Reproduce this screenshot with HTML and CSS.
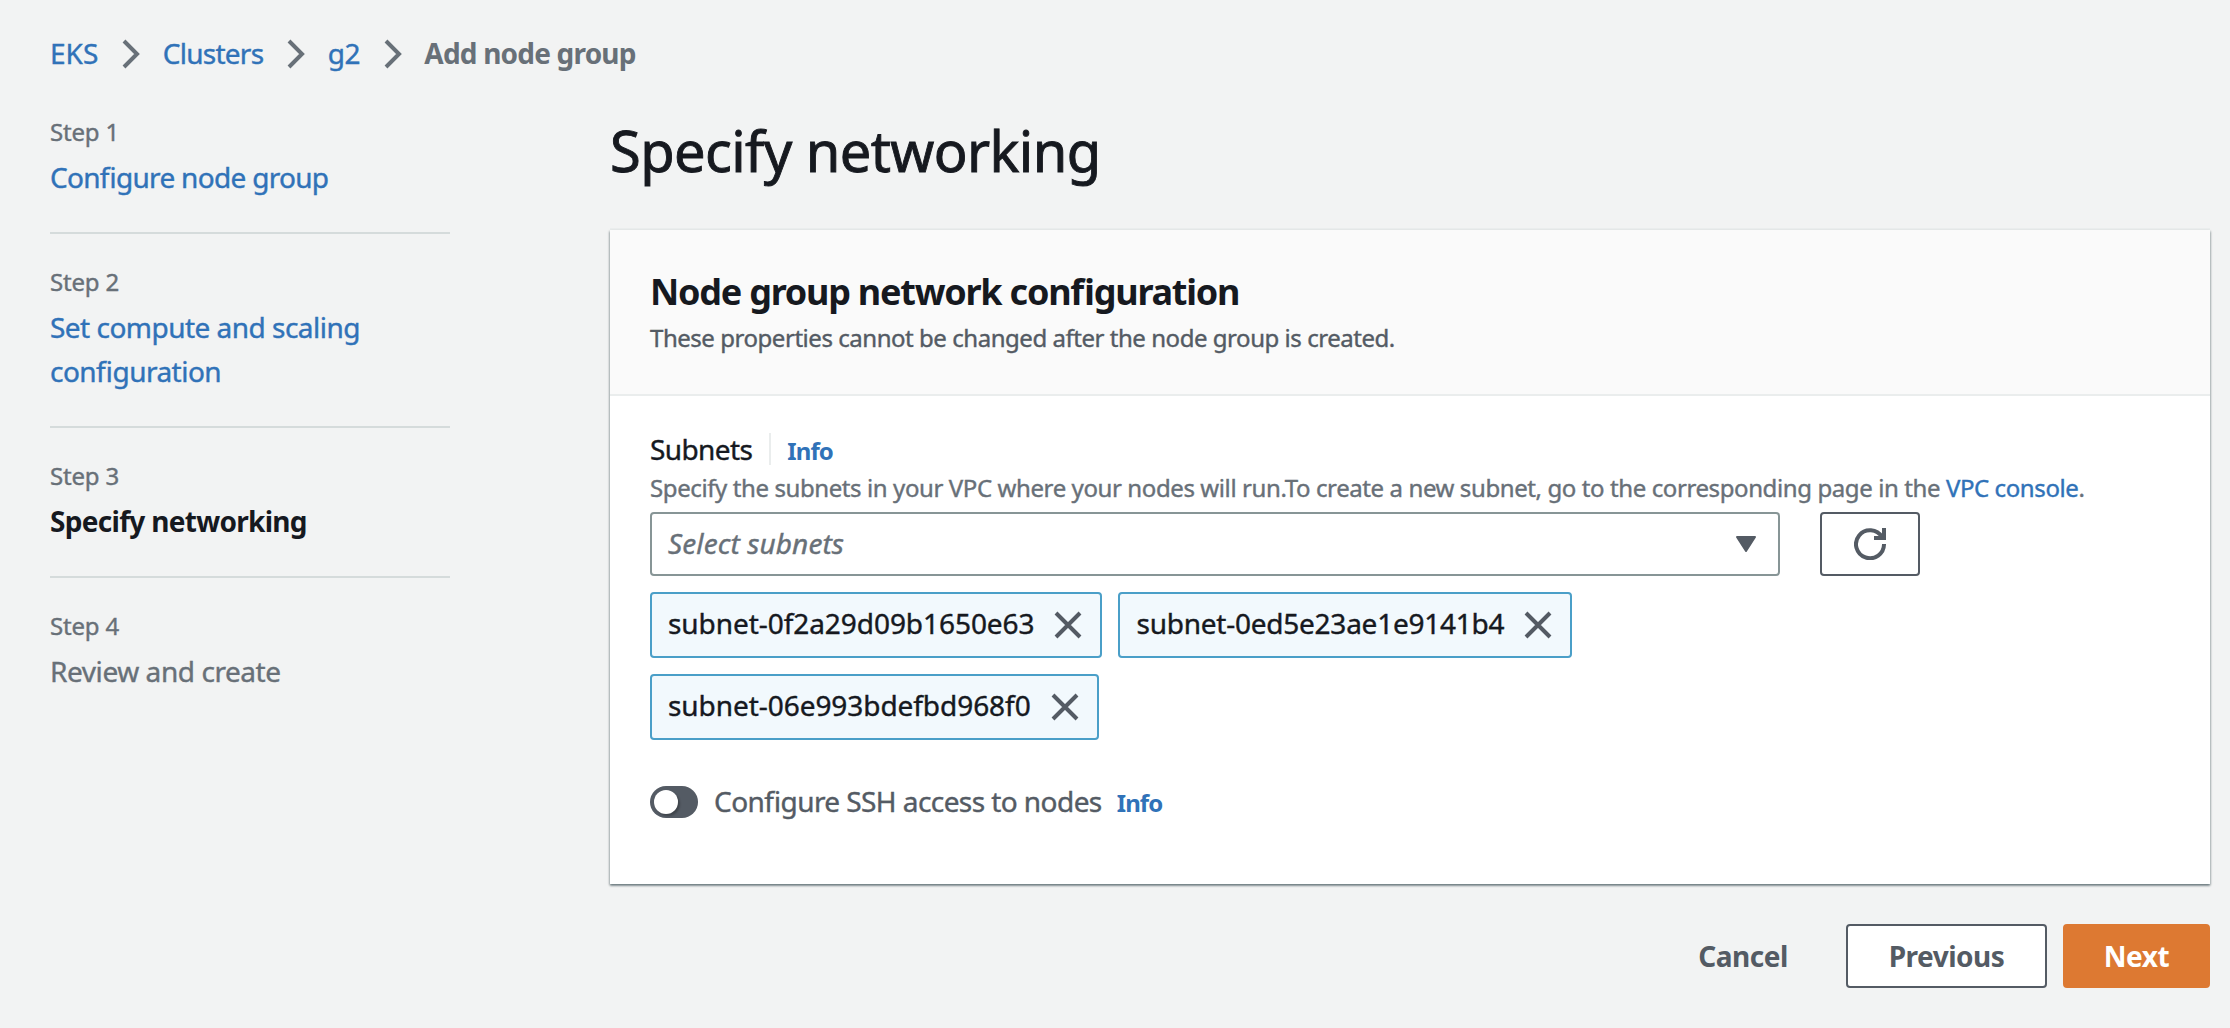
FILE: index.html
```html
<!DOCTYPE html>
<html lang="en">
<head>
<meta charset="utf-8">
<title>Add node group</title>
<link rel="stylesheet" href="styles.css">
</head>
<body>
<nav class="breadcrumb">
  <a class="link crumb-eks">EKS</a>
  <svg class="chevron" width="18" height="30" viewBox="0 0 18 30"><path d="M2 2l13 13L2 28"/></svg>
  <a class="link crumb-clusters">Clusters</a>
  <svg class="chevron" width="18" height="30" viewBox="0 0 18 30"><path d="M2 2l13 13L2 28"/></svg>
  <a class="link">g2</a>
  <svg class="chevron" width="18" height="30" viewBox="0 0 18 30"><path d="M2 2l13 13L2 28"/></svg>
  <span class="current">Add node group</span>
</nav>
<div class="layout">
  <aside class="steps">
    <div class="step"><div class="step-label">Step 1</div><a class="step-name link">Configure node group</a></div>
    <div class="step"><div class="step-label">Step 2</div><a class="step-name link wide">Set compute and scaling configuration</a></div>
    <div class="step"><div class="step-label">Step 3</div><div class="step-name active">Specify networking</div></div>
    <div class="step"><div class="step-label">Step 4</div><div class="step-name upcoming">Review and create</div></div>
  </aside>
  <main class="main">
    <h1 class="title">Specify networking</h1>
    <section class="card">
      <header class="card-header">
        <h2 class="card-title">Node group network configuration</h2>
        <p class="card-text">These properties cannot be changed after the node group is created.</p>
      </header>
      <div class="card-body">
        <div class="label-row"><span class="label">Subnets</span><span class="divider"></span><a class="info">Info</a></div>
        <p class="hint">Specify the subnets in your VPC where your nodes will run.To create a new subnet, go to the corresponding page in the <a class="link">VPC console</a>.</p>
        <div class="select-row">
          <div class="select"><span class="placeholder">Select subnets</span>
            <svg width="22" height="18" viewBox="0 0 22 18"><path d="M2 2h18l-9 14z" fill="#545b64" stroke="#545b64" stroke-width="2" stroke-linejoin="round"/></svg>
          </div>
          <button class="refresh" aria-label="Refresh">
            <svg width="32" height="32" viewBox="0 0 32 32"><path d="M30 16A14 14 0 1 1 28 9"/><path d="M30 0v10H20"/></svg>
          </button>
        </div>
        <div class="tokens">
          <div class="token"><span>subnet-0f2a29d09b1650e63</span><svg width="28" height="28" viewBox="0 0 28 28"><path d="M2 2l24 24M26 2L2 26"/></svg></div>
          <div class="token tight"><span>subnet-0ed5e23ae1e9141b4</span><svg width="28" height="28" viewBox="0 0 28 28"><path d="M2 2l24 24M26 2L2 26"/></svg></div>
          <div class="token"><span>subnet-06e993bdefbd968f0</span><svg width="28" height="28" viewBox="0 0 28 28"><path d="M2 2l24 24M26 2L2 26"/></svg></div>
        </div>
        <div class="toggle-row">
          <span class="toggle"><span class="knob"></span></span>
          <span class="toggle-label">Configure SSH access to nodes</span>
          <a class="info">Info</a>
        </div>
      </div>
    </section>
    <footer class="actions">
      <button class="btn cancel">Cancel</button>
      <button class="btn previous">Previous</button>
      <button class="btn next">Next</button>
    </footer>
  </main>
</div>
</body>
</html>
```
FILE: styles.css
```css
* { box-sizing: border-box; }
body {
  margin: 0;
  height: 1028px;
  overflow: hidden;
  background: #f2f3f3;
  color: #16191f;
  font: 28px/44px "Noto Sans", "Open Sans", sans-serif;
  letter-spacing: -0.6px;
  font-feature-settings: "liga" 1;
  -webkit-text-stroke-width: 0.4px;
}
h1, h2, p { margin: 0; }
h2, .current, .active, .info, .btn { -webkit-text-stroke-width: 0; }
svg { display: block; flex: none; }
path { stroke-linecap: butt; }
.link { color: #3072b8; }

.breadcrumb {
  display: flex;
  align-items: center;
  padding: 31px 0 0 50px;
  height: 75px;
}
.crumb-eks { letter-spacing: 0; }
.crumb-clusters { letter-spacing: -0.75px; }
.chevron { margin: 1px 22.5px 0 24px; }
.chevron path { fill: none; stroke: #687078; stroke-width: 4; }
.current { color: #687078; font-weight: 700; letter-spacing: -0.8px; }

.layout { display: flex; gap: 160px; padding: 41px 20px 0 50px; }
.steps { width: 400px; flex: none; }
.step { padding-bottom: 33px; border-bottom: 2px solid #d5dbdb; margin-bottom: 32px; color: #687078; }
.step:last-child { border: 0; margin: 0; }
.step-label { font-size: 24px; line-height: 32px; margin-bottom: 7px; letter-spacing: -0.2px; }
.step-name { display: block; letter-spacing: -0.7px; }
.step-name.wide { letter-spacing: -0.52px; }
.step-name.upcoming { letter-spacing: -0.43px; }
.step-name.active { color: #16191f; font-weight: 700; }

.main { flex: 1; }
.title { font-size: 56px; font-weight: 400; line-height: 68px; letter-spacing: -0.6px; margin-bottom: 46px; -webkit-text-stroke-width: 0.9px; }
.card {
  height: 654px;
  background: #fff;
  box-shadow: 0 2px 2px 0 rgba(0, 28, 36, .35), 1px 1px 2px 0 rgba(0, 28, 36, .2), -1px 1px 2px 0 rgba(0, 28, 36, .2), 0 -2px 0 0 #eaeded;
}
.card-header { height: 166px; padding: 40px 40px 0; background: #fafafa; border-bottom: 2px solid #eaeded; }
.card-title { font-size: 36px; line-height: 44px; letter-spacing: -1.24px; margin-bottom: 6px; }
.card-text { font-size: 24px; line-height: 36px; letter-spacing: -0.46px; color: #545b64; }
.card-body { padding: 31px 40px 0; }
.label-row { display: flex; align-items: baseline; height: 44px; }
.divider { align-self: flex-start; width: 2px; height: 32px; margin: 6px 16px 0 17px; background: #eaeded; }
.info { color: #3072b8; font-size: 24px; font-weight: 700; letter-spacing: -0.9px; }
.hint { font-size: 24px; line-height: 32px; letter-spacing: -0.4px; color: #687078; margin: 1px 0 8px; white-space: nowrap; }
.select-row { display: flex; gap: 40px; }
.select {
  display: flex;
  align-items: center;
  justify-content: space-between;
  width: 1130px;
  height: 64px;
  padding: 0 21px 0 16px;
  border: 2px solid #879596;
  border-radius: 4px;
}
.placeholder { font-style: italic; color: #687078; letter-spacing: 0.1px; padding-bottom: 2px; }
.refresh {
  display: flex;
  align-items: center;
  justify-content: center;
  width: 100px;
  height: 64px;
  padding: 0;
  background: #fff;
  border: 2px solid #545b64;
  border-radius: 4px;
}
.refresh path { fill: none; stroke: #545b64; stroke-width: 4; }
.tokens { display: flex; flex-wrap: wrap; gap: 16px; width: 1130px; margin-top: 16px; }
.token {
  display: flex;
  align-items: center;
  gap: 20px;
  height: 66px;
  padding: 0 18px 0 16px;
  background: #f2f9fd;
  border: 2px solid #4a9fc8;
  border-radius: 4px;
  letter-spacing: -0.06px;
}
.token.tight { letter-spacing: -0.24px; }
.token span { padding-bottom: 4px; }
.token svg { margin-bottom: 1px; }
.token path { stroke: #545b64; stroke-width: 4; }
.toggle-row { display: flex; align-items: baseline; height: 44px; margin-top: 39px; }
.toggle { align-self: center; width: 48px; height: 32px; padding: 4px; border-radius: 16px; background: #545b64; margin: 2px 16px 0 0; }
.knob { display: block; width: 24px; height: 24px; border-radius: 12px; background: #fff; box-shadow: 2px 2px 2px rgba(0, 0, 0, .25); }
.toggle-label { color: #545b64; letter-spacing: -0.57px; margin-right: 15px; }

.actions { display: flex; justify-content: flex-end; margin-top: 40px; }
.btn {
  height: 64px;
  padding: 0 0 1px;
  border: 2px solid transparent;
  border-radius: 4px;
  background: none;
  color: #545b64;
  font: 700 28px/44px "Noto Sans", "Open Sans", sans-serif;
  letter-spacing: -0.5px;
}
.cancel { width: 176px; margin-right: 15px; }
.previous { width: 201px; background: #fff; border-color: #545b64; margin-right: 16px; }
.next { width: 147px; background: #dd7932; border-color: #dd7932; color: #fff; }
```
